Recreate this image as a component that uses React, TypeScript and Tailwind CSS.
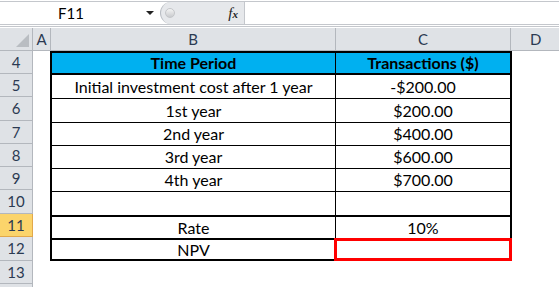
import React from "react";

const rows = [4, 5, 6, 7, 8, 9, 10, 11, 12, 13];

const tableRows: { b: string; c: string; h: number; top: string }[] = [
  { b: "Initial investment cost after 1 year", c: "-$200.00", h: 23, top: "" },
  { b: "1st year", c: "$200.00", h: 24, top: "border-t border-black" },
  { b: "2nd year", c: "$400.00", h: 23, top: "border-t border-black" },
  { b: "3rd year", c: "$600.00", h: 23, top: "border-t border-black" },
  { b: "4th year", c: "$700.00", h: 23, top: "border-t border-black" },
  { b: "", c: "", h: 24, top: "border-t border-black" },
  { b: "Rate", c: "10%", h: 23, top: "border-t-2 border-black" },
];

const FormulaBar: React.FC = () => {
  return (
    <div className="h-[28px] flex flex-col">
      <div className="h-[24px] flex border-t border-b border-[#c4c7cc] mt-[1px]">
        <div className="w-[160px] bg-white flex items-center relative">
          <span className="w-[142px] text-center text-[15px] text-black">F11</span>
          <span className="absolute left-[146px] top-[9px] w-0 h-0 border-l-[4px] border-r-[4px] border-t-[4px] border-l-transparent border-r-transparent border-t-[#222]" />
        </div>
        <div className="w-[84px] bg-[#e6e8eb] flex items-center relative rounded-l-[12px] border-l border-[#b8bcc2]">
          <span className="ml-[4px] w-[10px] h-[10px] rounded-full bg-gradient-to-b from-[#f4f4f4] to-[#c9cbce] border border-[#c4c6c9]" />
          <span className="ml-auto mr-[6px] font-['Liberation_Serif'] italic text-[15px] text-[#222]">
            f<span className="text-[11px] font-bold">x</span>
          </span>
        </div>
        <div className="flex-1 bg-white border-l border-[#c4c7cc]" />
      </div>
      <div className="h-[1px] mt-[1px] bg-[#c4c7cc]" />
    </div>
  );
};

const App: React.FC = () => {
  return (
    <div className="w-[559px] h-[287px] bg-white overflow-hidden font-['Lato',sans-serif] text-[15px] leading-none">
      <FormulaBar />
      <div className="grid grid-cols-[33px_18px_285px_175px_1fr] grid-rows-[23px_23px_23px_24px_23px_23px_23px_24px_23px_24px_23px_1fr] h-[259px]">
        {/* header row */}
        <div className="bg-[#dfe2e6] border-r border-b border-[#b3b7bd] flex items-end justify-end p-[3px]">
          <span className="w-0 h-0 [border-bottom:13px_solid_#b9bdc2] [border-left:13px_solid_transparent]" />
        </div>
        <div className="bg-[#dfe2e6] border-r border-b border-[#b3b7bd] flex items-center justify-center text-[#2b3a52]">A</div>
        <div className="bg-[#dfe2e6] border-r border-b border-[#b3b7bd] flex items-center justify-center text-[#2b3a52]">B</div>
        <div className="bg-[#dfe2e6] border-r border-b border-[#b3b7bd] flex items-center justify-center text-[#2b3a52]">C</div>
        <div className="bg-[#dfe2e6] border-b border-[#b3b7bd] flex items-center justify-start pl-[19px] text-[#2b3a52]">D</div>

        {rows.map((r, i) => (
          <div
            key={r}
            style={{ gridRow: i + 2, gridColumn: 1 }}
            className={
              r === 11
                ? "bg-[#fbd46b] border-r border-b border-[#e2a84a] flex items-center justify-center text-[#2b3a52]"
                : "bg-[#dfe2e6] border-r border-b border-[#b3b7bd] flex items-center justify-center text-[#2b3a52]"
            }
          >
            {r}
          </div>
        ))}
        <div className="col-start-1 row-start-12 bg-[#dfe2e6] border-r border-[#b3b7bd]" />

        {/* the table B4:C12 */}
        <div className="col-start-3 col-end-5 row-start-2 row-end-11 -ml-[1px] -mr-[1px] flex flex-col border-2 border-black text-black text-[16px]">
          <div className="h-[22px] flex bg-[#00b0f0] border-b-2 border-black font-bold">
            <div className="w-[284px] border-r border-black flex items-center justify-center">Time Period</div>
            <div className="flex-1 flex items-center justify-center">Transactions ($)</div>
          </div>
          {tableRows.map((t, i) => (
            <div key={i} className={`flex ${t.top}`} style={{ height: t.h }}>
              <div className="w-[284px] border-r border-black flex items-center justify-center">{t.b}</div>
              <div className="flex-1 flex items-center justify-center">{t.c}</div>
            </div>
          ))}
          <div className="flex-1 flex border-t-2 border-black">
            <div className="w-[284px] border-r border-black flex items-center justify-center">NPV</div>
            <div className="flex-1 relative">
              <div className="absolute -left-[2px] -top-[2px] -right-[2px] -bottom-[2px] border-[3px] border-[#ff0000]" />
            </div>
          </div>
        </div>
      </div>
    </div>
  );
};

export default App;
